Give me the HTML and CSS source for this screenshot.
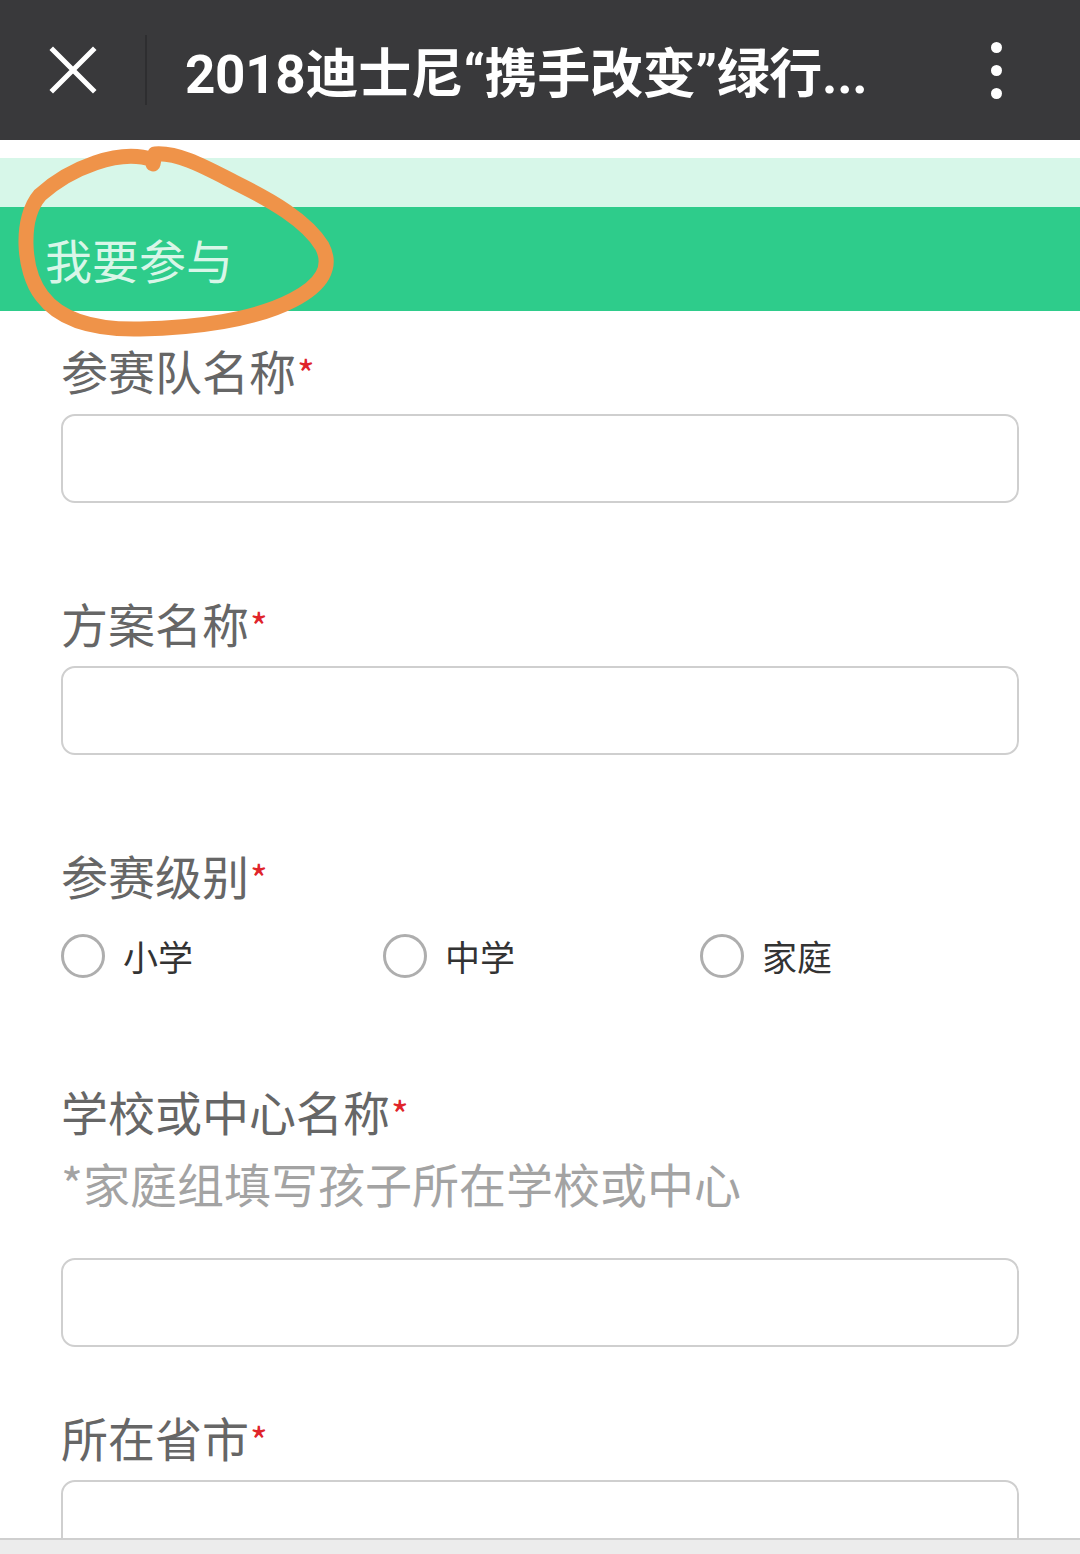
FILE: index.html
```html
<!DOCTYPE html>
<html lang="zh-CN">
<head>
<meta charset="utf-8">
<title>2018迪士尼“携手改变”绿行</title>
<link rel="stylesheet" href="styles.css">
</head>
<body>
<div class="page">
  <header class="topbar">
    <div class="close-btn">
      <svg width="48" height="48" viewBox="0 0 48 48"><path d="M4 4 L44 44 M44 4 L4 44" stroke="#fff" stroke-width="5" stroke-linecap="square" fill="none"/></svg>
    </div>
    <div class="divider"></div>
    <div class="title">2018迪士尼“携手改变”绿行...</div>
    <div class="more">
      <span class="dot"></span><span class="dot"></span><span class="dot"></span>
    </div>
  </header>
  <main class="content">
    <div class="gap-white"></div>
    <div class="mint-strip"></div>
    <div class="section-bar">我要参与</div>
    <svg class="scribble" width="360" height="210" viewBox="0 0 360 210">
      <path d="M153 20 C 120 8, 70 28, 40 55 C 20 78, 22 130, 42 156 C 60 180, 95 190, 140 189 C 195 188, 255 180, 293 160 C 322 145, 333 127, 322 106 C 306 80, 270 60, 240 45 C 210 30, 180 12, 155 14 L 153 24" stroke="#ef9349" stroke-width="15" fill="none" stroke-linecap="round" stroke-linejoin="round"/>
    </svg>
    <form class="form">
      <div class="field f1">
        <label class="label">参赛队名称<span class="req">*</span></label>
        <div class="input"></div>
      </div>
      <div class="field f2">
        <label class="label">方案名称<span class="req">*</span></label>
        <div class="input"></div>
      </div>
      <div class="field f3">
        <label class="label">参赛级别<span class="req">*</span></label>
        <div class="radios">
          <div class="radio r1"><span class="circle"></span><span class="rtext">小学</span></div>
          <div class="radio r2"><span class="circle"></span><span class="rtext">中学</span></div>
          <div class="radio r3"><span class="circle"></span><span class="rtext">家庭</span></div>
        </div>
      </div>
      <div class="field f4">
        <label class="label">学校或中心名称<span class="req">*</span></label>
        <div class="hint">*家庭组填写孩子所在学校或中心</div>
        <div class="input"></div>
      </div>
      <div class="field f5">
        <label class="label">所在省市<span class="req">*</span></label>
        <div class="input"></div>
      </div>
    </form>
  </main>
  <footer class="bottombar"></footer>
</div>
</body>
</html>
```

FILE: styles.css
```css
* { box-sizing: border-box; }
html, body { margin: 0; padding: 0; background: #fff; }
body { font-family: "Noto Sans CJK SC", "Noto Sans", sans-serif; }
.page { width: 1080px; height: 1554px; display: flex; flex-direction: column; overflow: hidden; }

.topbar { height: 140px; flex: none; background: #39393b; display: flex; align-items: center; position: relative; }
.close-btn { width: 145px; height: 140px; display: flex; align-items: center; padding-left: 49px; }
.close-btn svg { display: block; }
.divider { width: 2px; height: 70px; background: #2e2e30; }
.title { margin-left: 38px; color: #fff; font-family: "Roboto", "Noto Sans CJK SC", sans-serif; font-size: 53px; font-weight: 700; flex: 1; white-space: nowrap; overflow: hidden; letter-spacing: -0.3px; }
.more { width: 60px; margin-right: 54px; display: flex; flex-direction: column; align-items: center; gap: 12px; }
.dot { width: 11px; height: 11px; border-radius: 50%; background: #fff; display: block; }

.content { flex: 1; position: relative; overflow: hidden; }
.gap-white { height: 18px; }
.mint-strip { height: 49px; background: #d7f7e9; }
.section-bar { height: 104px; background: #2ecc8b; color: #d9f6e8; font-size: 47px; padding-left: 45px; line-height: 104px; }
.scribble { position: absolute; left: 0; top: 0; pointer-events: none; }

.form { padding: 0 61px; }
.label { display: flex; align-items: center; height: 56px; font-size: 47px; line-height: 56px; color: #666; }
.req { color: #e0242a; font-size: 38px; line-height: 1; margin-left: 1px; margin-top: 6px; }
.input { height: 89px; border: 2px solid #cfcfcf; border-radius: 14px; background: #fff; margin-top: 16px; }
.f1 { margin-top: 31px; }
.f2 { margin-top: 92px; }
.f2 .input { margin-top: 15px; }
.f3 { margin-top: 92px; }
.f4 { margin-top: 105px; }
.f5 { margin-top: 62px; }
.f5 .input { margin-top: 15px; }

.radios { display: flex; margin-top: 31px; height: 44px; }
.radio { display: flex; align-items: center; }
.r1 { width: 322px; }
.r2 { width: 317px; }
.circle { width: 44px; height: 44px; border-radius: 50%; border: 3px solid #aeaeae; display: block; flex: none; }
.rtext { font-size: 35px; color: #333; margin-left: 18px; line-height: 44px; }

.hint { font-size: 47px; line-height: 56px; color: #a3a3a3; margin-top: 16px; }
.f4 .input { margin-top: 47px; }

.bottombar { height: 16px; flex: none; background: #ececec; border-top: 2px solid #cfcfcf; }
```
